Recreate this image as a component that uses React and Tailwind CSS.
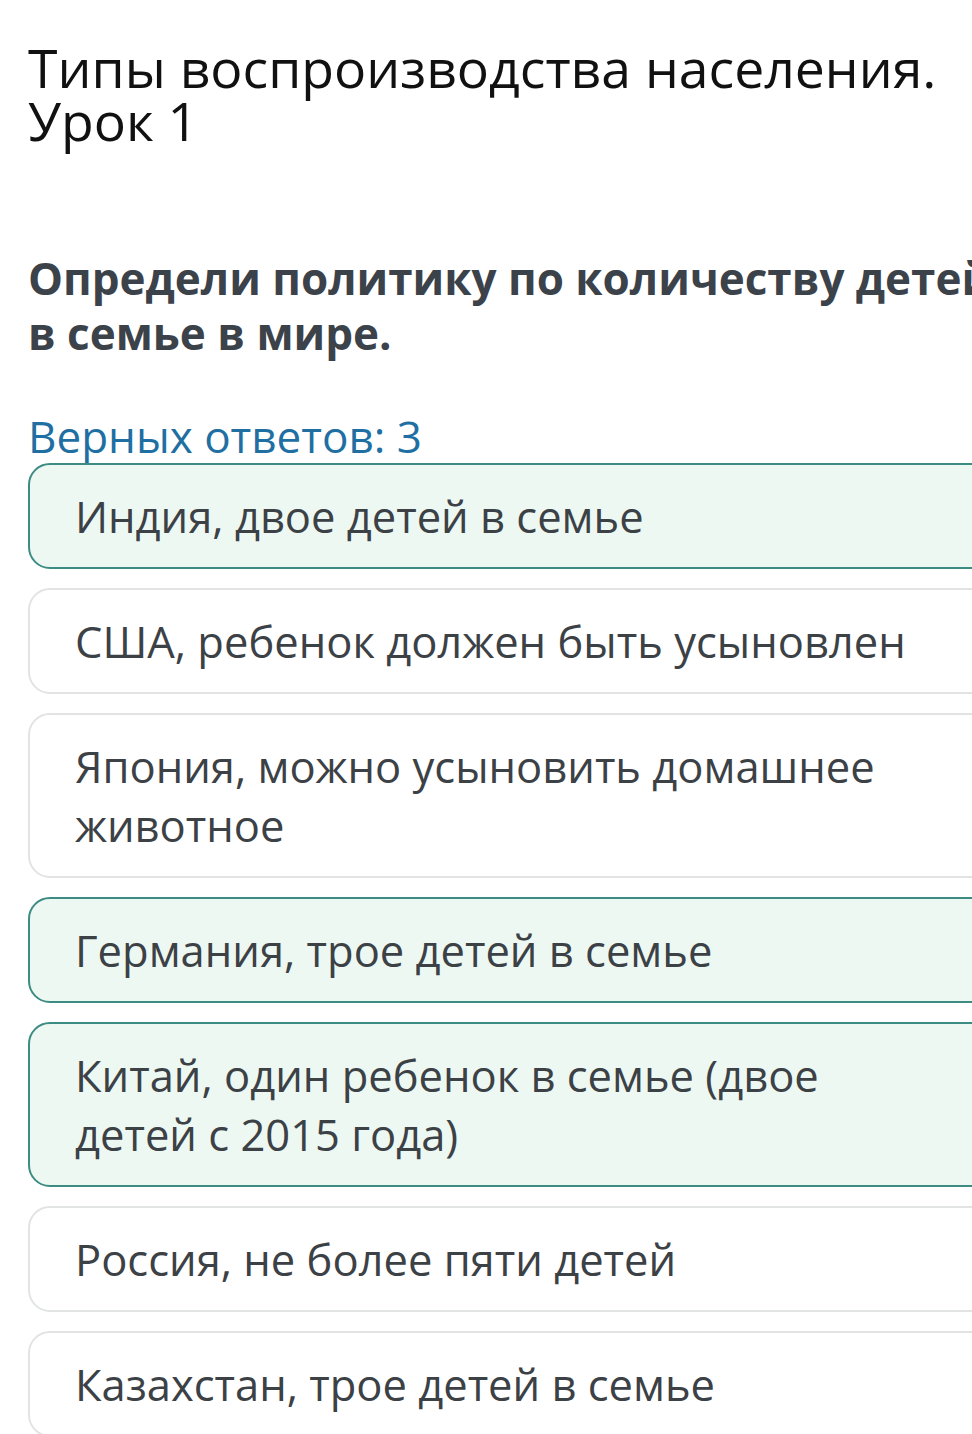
const answers = [
  { text: "Индия, двое детей в семье", picked: true },
  { text: "США, ребенок должен быть усыновлен", picked: false },
  { text: "Япония, можно усыновить домашнее животное", picked: false },
  { text: "Германия, трое детей в семье", picked: true },
  { text: "Китай, один ребенок в семье (двое детей с 2015 года)", picked: true },
  { text: "Россия, не более пяти детей", picked: false },
  { text: "Казахстан, трое детей в семье", picked: false },
];

export default function App() {
  return (
    <div
      className="w-[972px] h-[1434px] overflow-hidden bg-white"
      style={{ fontFamily: '"Open Sans", "Noto Sans", sans-serif' }}
    >
      <div className="w-[1010px] pl-[28px] pt-[41px]">
        {/* заголовок урока */}
        <h1 className="text-[53.5px] leading-[53px] font-normal text-[#111] w-[950px]">
          Типы воспроизводства населения. Урок 1
        </h1>

        <p className="mt-[104px] text-[44px] leading-[55px] font-bold text-[#3c424a] w-[980px]">
          Определи политику по количеству детей в семье в мире.
        </p>

        <div className="mt-[51px] text-[44px] leading-[48px] text-[#1f6fa3]">
          Верных ответов: 3
        </div>

        <div className="mt-[3px] flex flex-col gap-[19px]">
          {answers.map((a, i) => (
            <div
              key={i}
              className={
                a.picked
                  ? "rounded-[22px] border-2 border-[#3d8c84] bg-[#edf8f3] px-[45px] py-[21.5px]"
                  : "rounded-[22px] border-2 border-[#e2e4e4] bg-white px-[45px] py-[21.5px]"
              }
            >
              <div className="w-[840px] text-[43.5px] leading-[59px] text-[#3c4146]">
                {a.text}
              </div>
            </div>
          ))}
        </div>
      </div>
    </div>
  );
}
